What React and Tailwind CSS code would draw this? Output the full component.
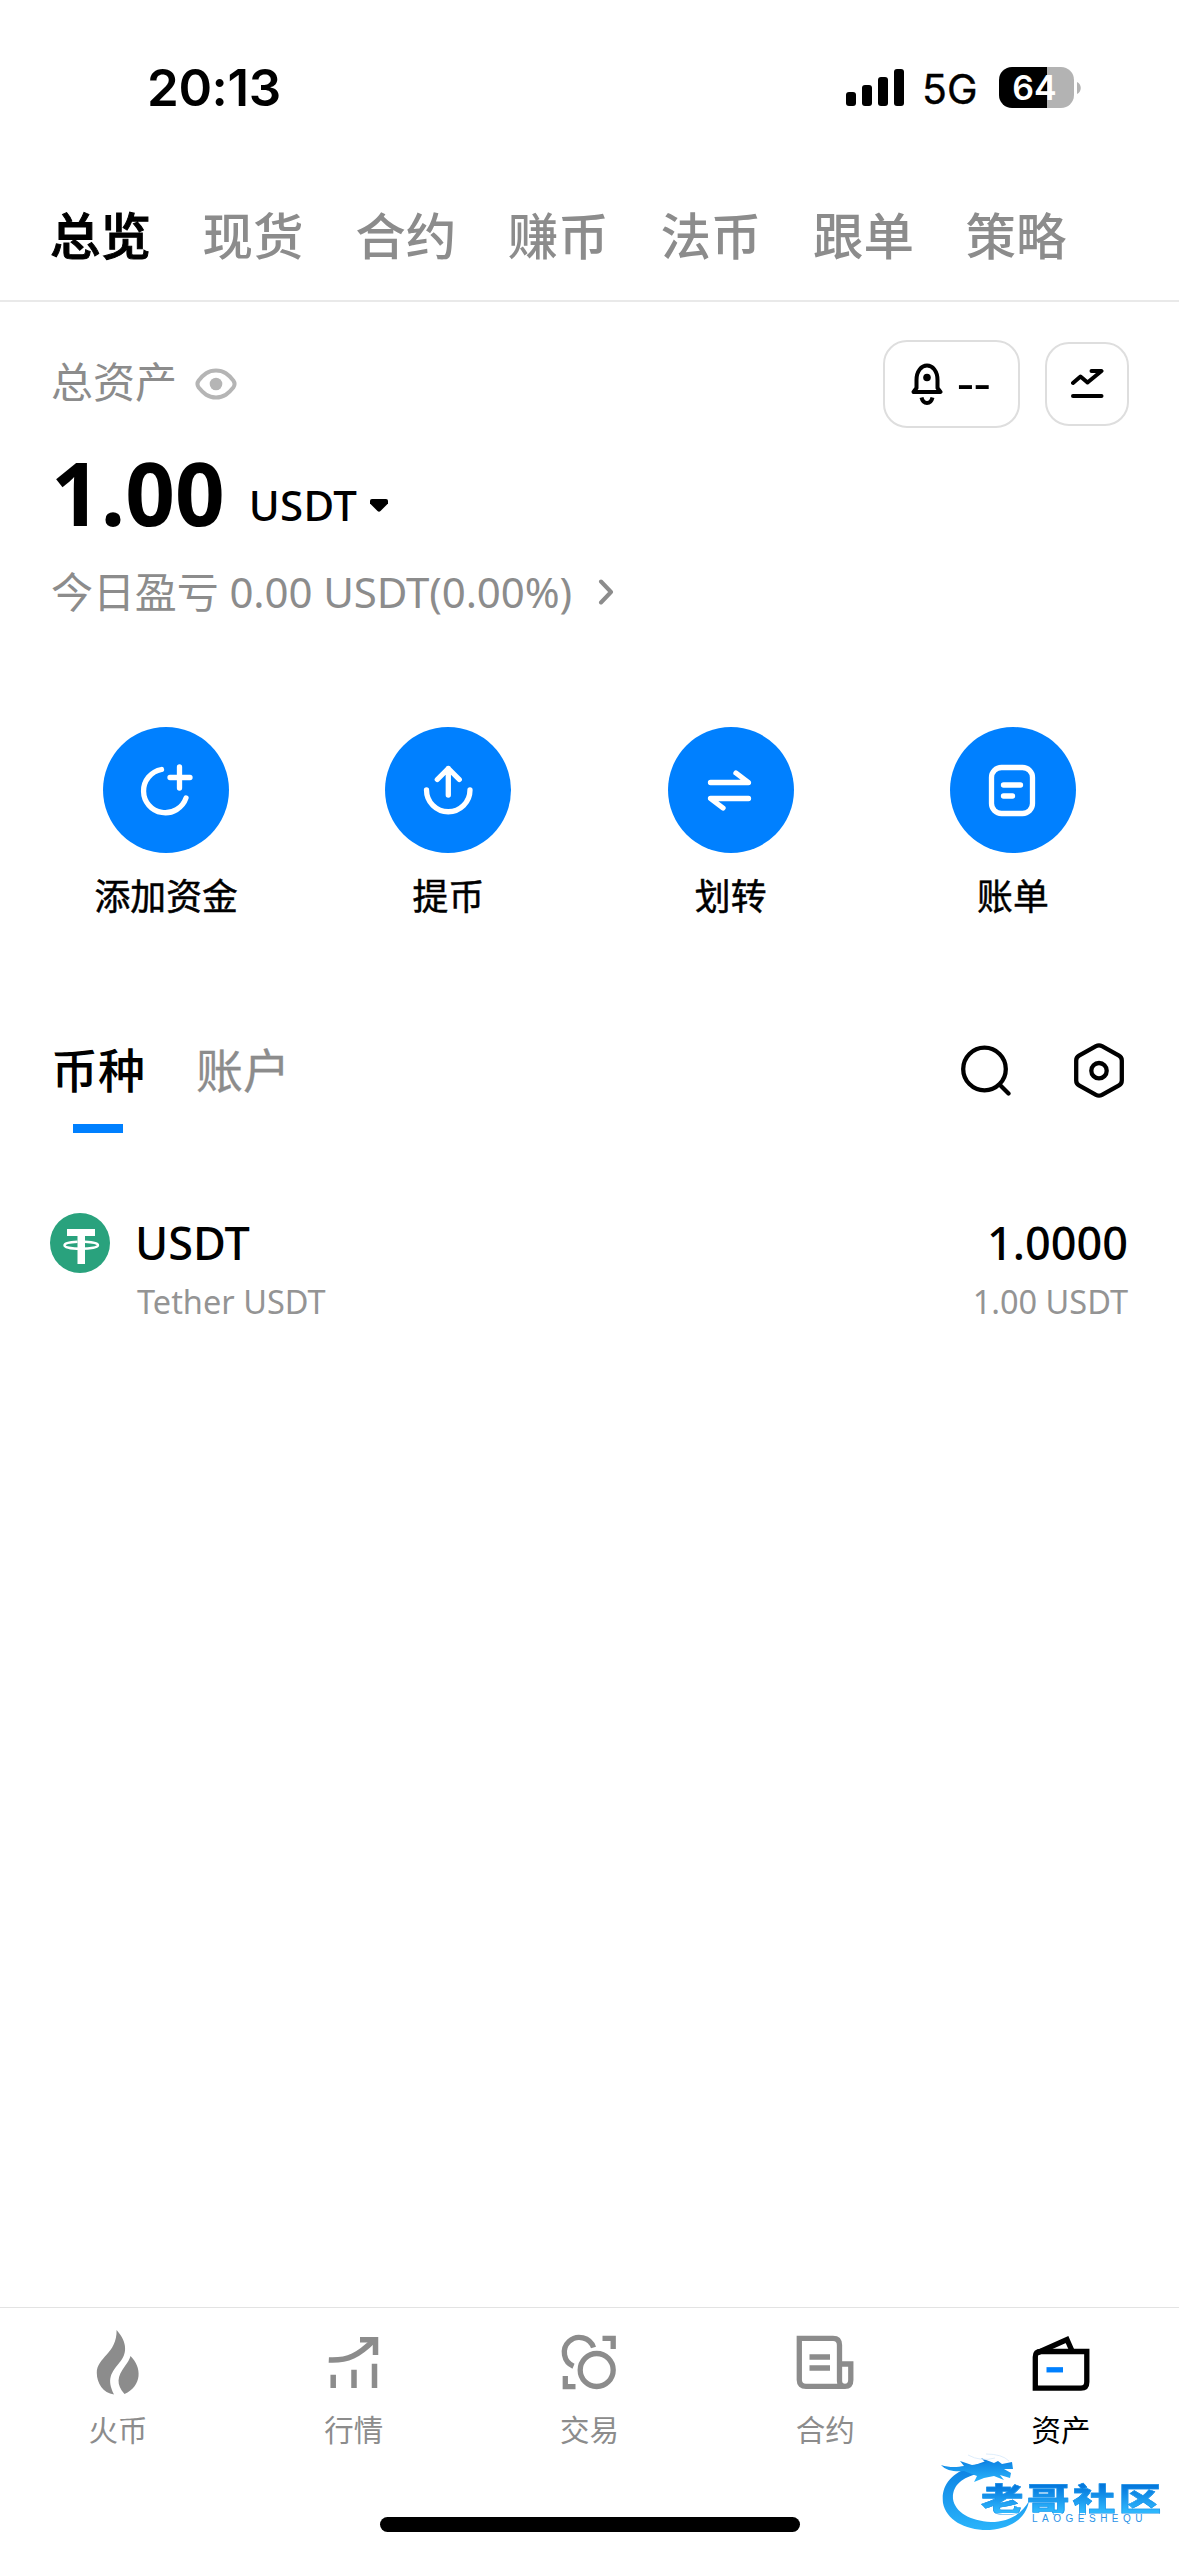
const TABS = ['总览', '现货', '合约', '赚币', '法币', '跟单', '策略'];

function StatusBar() {
  return (
    <div className="flex h-[171px] shrink-0 items-center pl-[147px] pr-[98px] pt-1 font-['Inter',sans-serif]">
      <span className="text-[51px] font-semibold leading-none tracking-[-0.4px]">20:13</span>
      <div className="ml-auto flex items-center">
        <svg width="58" height="38" viewBox="0 0 58 38">
          <rect x="0" y="23" width="10" height="14" rx="3" />
          <rect x="16" y="16" width="10" height="21" rx="3" />
          <rect x="32" y="8" width="10" height="29" rx="3" />
          <rect x="48" y="0" width="10" height="37" rx="3" />
        </svg>
        <span className="ml-[18px] w-[58px] pt-1 text-[41px] leading-none [-webkit-text-stroke:0.4px_#000]">5G</span>
        <div className="flex h-[41px] w-[75px] ml-[19px] items-center justify-center overflow-hidden rounded-[13px] bg-[linear-gradient(to_right,#000_48px,#b3b3b3_48px)] pr-1 text-[34px] font-semibold leading-none text-white">
          64
        </div>
        <svg className="ml-[3px]" width="4" height="12" viewBox="0 0 4 12">
          <path d="M0 0C5 2 5 10 0 12Z" fill="#b3b3b3" />
        </svg>
      </div>
    </div>
  );
}

function EyeIcon() {
  return (
    <svg width="42" height="32" viewBox="0 0 42 32" fill="none">
      <path d="M21 2.500C29 2.500 33.500 6.500 38.300 12.500Q40.800 16 38.300 19.500C33.500 25.500 29 29.500 21 29.500C13 29.500 8.500 25.500 3.700 19.500Q1.200 16 3.700 12.500C8.500 6.500 13 2.500 21 2.500Z" stroke="#b5b5b5" strokeWidth="4" />
      <circle cx="21" cy="16" r="6.300" fill="#b5b5b5" />
    </svg>
  );
}

function BellIcon() {
  return (
    <svg width="32" height="43" viewBox="0 0 32 43" fill="none" stroke="#000" strokeWidth="4" strokeLinejoin="round">
      <path d="M5.500 25V17C5.500 8 10.500 2.500 16 2.500C21.500 2.500 26.500 8 26.500 17V25L29.500 29H2.500L5.500 25Z" />
      <path d="M10.500 34.500C11.500 38.500 13.500 40 16 40C18.500 40 20.500 38.500 21.500 34.500" />
      <circle cx="16" cy="14.500" r="3.800" fill="#000" stroke="none" />
    </svg>
  );
}

function TrendIcon() {
  return (
    <svg width="33" height="30" viewBox="0 0 33 30" fill="none" stroke="#000" strokeWidth="4" strokeLinecap="round" strokeLinejoin="round">
      <path d="M2 14L9.500 7.500L16.500 13.500L30.500 2H20.500" />
      <path d="M2 27H30.500" />
    </svg>
  );
}

const ACTIONS = [
  {
    label: '添加资金',
    icon: (
      <>
        <path d="M21.500 5.500A21.800 21.800 0 1 0 46 34" />
        <path d="M39.500 3V24M30 13.500H50" />
      </>
    ),
  },
  {
    label: '提币',
    icon: (
      <>
        <path d="M4.500 26A21.700 21.700 0 0 0 48 26" />
        <path d="M26.300 31V4.500M15.300 15.500L26.300 4.500L37.300 15.500" />
      </>
    ),
  },
  {
    label: '划转',
    icon: (
      <>
        <path d="M6.500 18.500H44.500L32 9" />
        <path d="M44.500 34.500H6.500L19 44" />
      </>
    ),
  },
  {
    label: '账单',
    icon: (
      <>
        <rect x="5.500" y="3.500" width="41" height="46" rx="10" />
        <path d="M17.500 21H34.500M17.500 32H26.500" />
      </>
    ),
  },
];

function SearchIcon() {
  return (
    <svg width="50" height="51" viewBox="0 0 50 51" fill="none" stroke="#000" strokeWidth="4.300" strokeLinecap="round">
      <circle cx="23.500" cy="24" r="21.300" />
      <path d="M39 40L47.500 48.500" />
    </svg>
  );
}

function HexIcon() {
  return (
    <svg width="50" height="55" viewBox="0 0 50 55" fill="none" stroke="#000" strokeWidth="4.300">
      <path d="M22 3.200Q25 1.600 28 3.200L45 12.700Q47.800 14.300 47.800 17.500V37.500Q47.800 40.700 45 42.300L28 51.800Q25 53.400 22 51.800L5 42.300Q2.200 40.700 2.200 37.500V17.500Q2.200 14.300 5 12.700Z" />
      <circle cx="25" cy="27.700" r="7.700" />
    </svg>
  );
}

function TetherLogo() {
  return (
    <svg className="-ml-px" width="60" height="60" viewBox="0 0 60 60">
      <circle cx="30" cy="30" r="30" fill="#29a27d" />
      <path d="M17 16H45V23H35V51H27.500V23H17Z" fill="#fff" />
      <path d="M27.500 28.700C19 29 14.500 30.500 14.500 32.200C14.500 34.200 21 35.800 31 35.800C41 35.800 48 34.200 48 32.200C48 30.500 43 29 35 28.700" fill="none" stroke="#fff" strokeWidth="2.400" />
    </svg>
  );
}

const NAV = [
  {
    label: '火币',
    icon: (
      <g fill="#8c8c8c">
        <path d="M30.600 0C42 13 41 24 33.500 32.500C25 43 20.500 49 28 64.500C17 63 10.800 53 10.800 43C10.800 27 31 24 30.600 0Z" />
        <path d="M44.500 26C56 37 56.500 56 38.500 64C30 54 31 47 39 36Q43.500 30 44.500 26Z" />
      </g>
    ),
  },
  {
    label: '行情',
    icon: (
      <g fill="none" stroke="#8c8c8c" strokeWidth="5.500">
        <path d="M6.800 30C26 31 37 25 52 10" />
        <path d="M38 9.800H53.500V25" />
        <path d="M11.200 44.700V58M32 39.700V58M52.500 33.700V58" />
      </g>
    ),
  },
  {
    label: '交易',
    icon: (
      <g fill="none" stroke="#8c8c8c" strokeWidth="5.300">
        <path d="M16.500 36.200A15 15 0 1 1 36.500 17.500" />
        <circle cx="39.700" cy="40" r="16.500" />
        <path d="M45.500 8.300H56.200V19M18.500 56.600H8.300V46" />
      </g>
    ),
  },
  {
    label: '合约',
    icon: (
      <g fill="none" stroke="#8c8c8c" strokeWidth="5.300">
        <path d="M6.300 8.300H40Q46.500 8.300 46.500 15V51Q46.500 56.300 52 56.300Q57.800 56.300 57.800 50V34H47M52 56.300H13Q6.300 56.300 6.300 50V5.700" />
        <path d="M16.500 27H37M16.500 38H37" />
      </g>
    ),
  },
  {
    label: '资产',
    active: true,
    icon: (
      <g fill="none" stroke="#000" strokeWidth="5.300">
        <path d="M6.300 58.200V27Q6.300 21.500 12 21.500H57.800V52Q57.800 58.200 52 58.200Z" />
        <path d="M9 22.500L38 9.500L43.500 22" />
        <path d="M17.500 39.800H34" stroke="#0080ff" />
      </g>
    ),
  },
];

function Watermark() {
  return (
    <div className="absolute left-[938px] top-[2452px] h-[84px] w-[230px]">
      <svg className="absolute left-0 top-0" width="100" height="84" viewBox="0 0 100 84">
        <defs>
          <linearGradient id="dragon" x1="0" y1="0" x2="0" y2="1">
            <stop offset="0" stopColor="#0a7de0" />
            <stop offset="1" stopColor="#2ab4fb" />
          </linearGradient>
        </defs>
        <g fill="url(#dragon)">
          <path d="M34 14C12 22 3 34 5 51C8 68 28 79 52 78C74 76 88 66 91 49C84 62 70 70 53 70C32 69 17 60 15 47C14 34 24 25 40 22L52 19L48 9Z" />
          <path d="M3 13C12 16 20 15 26 14L22 9L34 13L48 11L43 6L56 11L60 9L64 12L74 10L75 17L66 17L73 21L72 26L62 23L66 28L56 24L46 26L36 30L39 24L26 19C18 20 8 19 3 13Z" />
        </g>
        <path d="M30 3Q43 10 57 6M48 2Q64 2 71 9" stroke="#d5e9fa" strokeWidth="0.800" fill="none" />
      </svg>
      <div className="absolute left-[43px] top-[29px] origin-left scale-x-[1.33] whitespace-nowrap bg-gradient-to-b from-[#0577dc] from-15% to-[#2eb7fd] to-95% bg-clip-text font-['Noto_Sans_CJK_SC',sans-serif] text-[32px] font-black leading-[32px] tracking-[2.500px] text-transparent [-webkit-text-stroke:0.5px_#1b94ea]">
        老哥社区
      </div>
      <div className="absolute left-[94px] top-[62px] whitespace-nowrap font-['Liberation_Sans',sans-serif] text-[10px] leading-[10px] tracking-[4.500px] text-[#2b93e6]">
        LAOGESHEQU
      </div>
    </div>
  );
}

export default function App() {
  return (
    <div lang="zh-CN" className="relative flex h-[2556px] w-[1179px] flex-col overflow-hidden bg-white font-['Noto_Sans','Noto_Sans_CJK_SC',sans-serif] text-black">
      <StatusBar />

      <nav className="flex h-[131px] shrink-0 items-center gap-[51.6px] border-b-2 border-[#e9e9e9] pl-[50px] pt-0.5 text-[50.500px] font-medium leading-none text-[#8c8c8c]">
        {TABS.map((t, i) => (
          <span key={t} className={i === 0 ? 'text-black [-webkit-text-stroke:1px_#000]' : ''}>{t}</span>
        ))}
      </nav>

      <section className="px-[51px] pt-[38px]">
        <div className="flex h-[88px] items-center">
          <span className="pb-1 text-[42px] leading-none text-[#8c8c8c]">总资产</span>
          <span className="ml-[18px]"><EyeIcon /></span>
          <button className="ml-auto flex h-[88px] w-[137px] items-center rounded-[24px] border-2 border-[#dedede] pl-[26px]">
            <BellIcon />
            <span className="ml-[14px] origin-left scale-x-[1.25] pb-[5px] text-[42px] font-medium leading-none">--</span>
          </button>
          <button className="ml-[25px] mr-[-1px] flex size-[84px] items-center justify-center rounded-[24px] border-2 border-[#dedede]">
            <TrendIcon />
          </button>
        </div>
        <div className="mt-[22px] flex h-[84px] items-baseline">
          <span className="text-[87px] font-bold leading-[84px]">1.00</span>
          <span className="relative -top-[5px] ml-[24px] text-[42px] font-medium leading-none tracking-[0.3px]">USDT</span>
          <svg className="ml-[13px] self-center translate-y-[13px]" width="18" height="13" viewBox="0 0 18 13">
            <path d="M2 0H16Q18 0 18 2V4.500L10.500 12Q9 13.500 7.500 12L0 4.500V2Q0 0 2 0Z" />
          </svg>
        </div>
        <div className="mt-[30px] flex h-[56px] items-center text-[42px] leading-none tracking-[-0.1px] text-[#8c8c8c]">
          <span>今日盈亏 0.00 USDT(0.00%)</span>
          <svg className="ml-[26px]" width="16" height="26" viewBox="0 0 16 26" fill="none" stroke="#8c8c8c" strokeWidth="4" strokeLinecap="round" strokeLinejoin="round">
            <path d="M3 2.500L13 13L3 23.500" />
          </svg>
        </div>
      </section>

      <section className="mt-[107px] grid grid-cols-4 px-[25px]">
        {ACTIONS.map((a) => (
          <div key={a.label} className="flex flex-col items-center">
            <div className="flex size-[126px] items-center justify-center rounded-full bg-[#0080ff]">
              <svg width="53" height="53" viewBox="0 0 53 53" fill="none" stroke="#fff" strokeWidth="5.300" strokeLinecap="round" strokeLinejoin="round">
                {a.icon}
              </svg>
            </div>
            <span className="mt-[16px] text-[35.800px] leading-[54px] [-webkit-text-stroke:0.5px_#000]">{a.label}</span>
          </div>
        ))}
      </section>

      <section className="mt-[99px] px-[51px]">
        <div className="flex h-[96px] items-center text-[47px] leading-none">
          <span className="font-medium">币种</span>
          <span className="ml-[51px] text-[#8c8c8c] [-webkit-text-stroke:0.3px_#8c8c8c]">账户</span>
          <span className="ml-auto"><SearchIcon /></span>
          <span className="ml-[63px] mr-1"><HexIcon /></span>
        </div>
        <div className="ml-[22px] mt-[6px] h-[9px] w-[50px] bg-[#0080ff]" />
        <div className="mt-[80px] flex">
          <TetherLogo />
          <div className="ml-[25px] flex flex-col">
            <span className="text-[45px] font-medium leading-[60px]">USDT</span>
            <span className="mt-[9px] pl-[2px] text-[32.500px] leading-[40px] text-[#949494]">Tether USDT</span>
          </div>
          <div className="ml-auto flex flex-col text-right">
            <span className="text-[45px] font-medium leading-[60px]">1.0000</span>
            <span className="mt-[9px] text-[32.500px] leading-[40px] text-[#949494]">1.00 USDT</span>
          </div>
        </div>
      </section>

      <footer className="mt-auto flex h-[249px] shrink-0 flex-col border-t border-[#e3e3e3]">
        <div className="grid grid-cols-5 pt-[22px]">
          {NAV.map((n) => (
            <div key={n.label} className="flex flex-col items-center">
              <svg width="64" height="65" viewBox="0 0 64 65">{n.icon}</svg>
              <span className={`mt-[15px] text-[29.500px] leading-[40px] ${n.active ? 'text-black' : 'text-[#8c8c8c]'}`}>{n.label}</span>
            </div>
          ))}
        </div>
        <div className="mx-auto mb-[24px] mt-auto h-[15px] w-[420px] rounded-full bg-black" />
      </footer>

      <Watermark />
    </div>
  );
}
